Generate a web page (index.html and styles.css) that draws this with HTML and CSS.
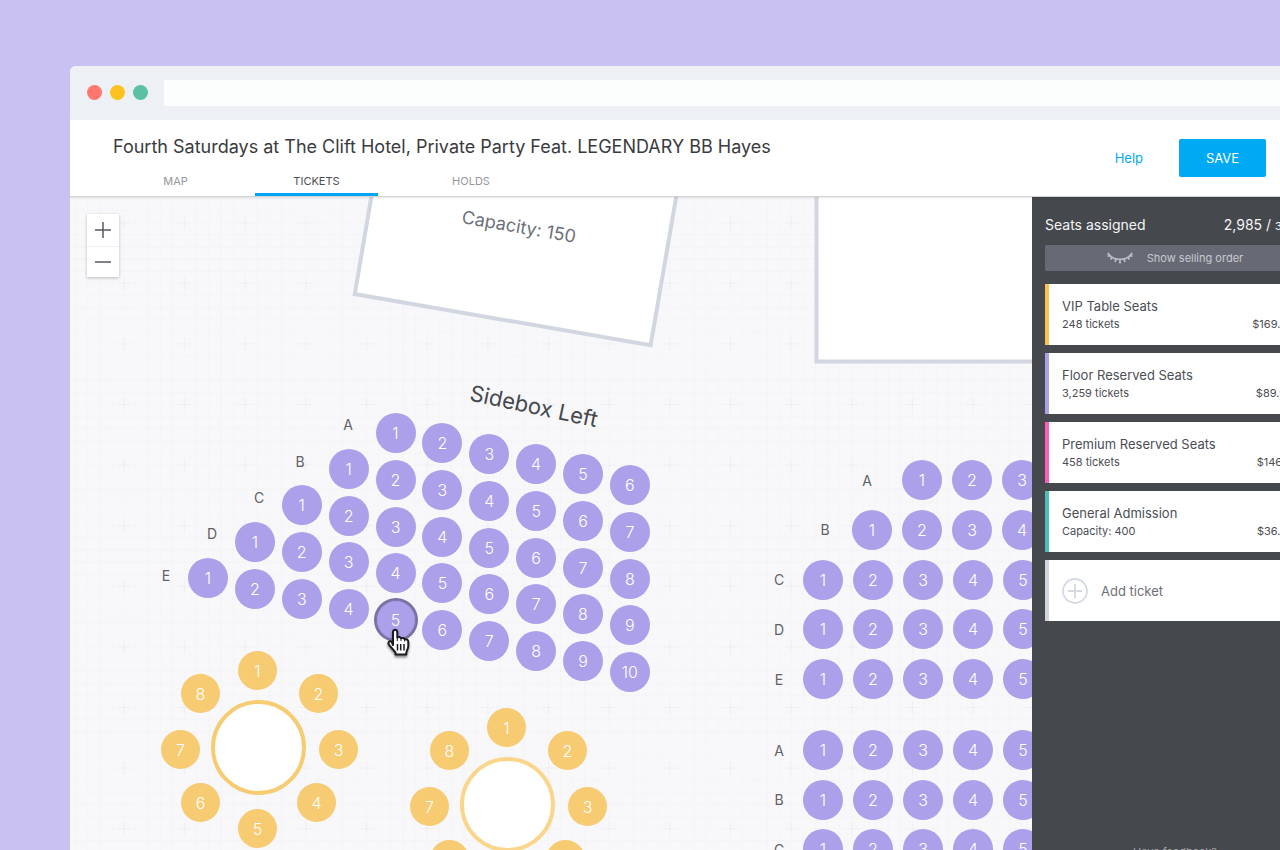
FILE: index.html
```html
<!DOCTYPE html>
<html lang="en">
<head>
<meta charset="utf-8">
<title>Seat map – Tickets</title>
<link rel="stylesheet" href="styles.css">
</head>
<body>
<div class="window">
  <div class="chrome">
    <span class="light light-red"></span>
    <span class="light light-yellow"></span>
    <span class="light light-green"></span>
    <input class="address" type="text" aria-label="Address">
  </div>

  <header class="header">
    <div class="header-main">
      <h1 class="title">Fourth Saturdays at The Clift Hotel, Private Party Feat. LEGENDARY BB Hayes</h1>
      <nav class="tabs">
        <a class="tab" href="#map">MAP</a>
        <a class="tab tab-active" href="#tickets" aria-current="page">TICKETS</a>
        <a class="tab tab-wide" href="#holds">HOLDS</a>
      </nav>
    </div>
    <div class="actions">
      <a class="help" href="#help">Help</a>
      <button class="save" type="button">SAVE</button>
    </div>
  </header>

  <div class="workspace">
    <main class="map">
      <svg class="backdrop" aria-hidden="true">
        <defs>
          <pattern id="grid" x="23.7" y="-4.6" width="60.65" height="60.6" patternUnits="userSpaceOnUse">
            <path d="M6.1 0V60.6M18.2 0V60.6M30.3 0V60.6M42.4 0V60.6M54.6 0V60.6M0 6.1H60.65M0 18.2H60.65M0 30.3H60.65M0 42.4H60.65M0 54.6H60.65" stroke="#f5f5f8" stroke-width="1.2"/>
            <path d="M24.3 30.3H36.3M30.3 24.3V36.3" stroke="#eeeff2" stroke-width="1.2"/>
          </pattern>
        </defs>
        <rect width="100%" height="100%" fill="url(#grid)"/>
        <path d="M311 -57L284.800 97L580.600 148.300L616 -57Z" fill="#fff" stroke="#d1d6e0" stroke-width="4"/>
        <path d="M746.5 -40V164.5H1100V-40Z" fill="#fff" stroke="#d1d6e0" stroke-width="4"/>
      </svg>

      <p class="area-label capacity">Capacity: 150</p>
      <p class="area-label sidebox">Sidebox Left</p>

      <span class="row-name name-a">A</span>
      <span class="row-name name-b">B</span>
      <span class="row-name name-c">C</span>
      <span class="row-name name-d">D</span>
      <span class="row-name name-e">E</span>

      <div class="side-block">
        <div class="column col-1"><button class="seat">1</button></div>
        <div class="column col-2"><button class="seat">1</button><button class="seat">2</button></div>
        <div class="column col-3"><button class="seat">1</button><button class="seat">2</button><button class="seat">3</button></div>
        <div class="column col-4"><button class="seat">1</button><button class="seat">2</button><button class="seat">3</button><button class="seat">4</button></div>
        <div class="column col-5"><button class="seat">1</button><button class="seat">2</button><button class="seat">3</button><button class="seat">4</button><button class="seat seat-hover">5</button></div>
        <div class="column col-6"><button class="seat">2</button><button class="seat">3</button><button class="seat">4</button><button class="seat">5</button><button class="seat">6</button></div>
        <div class="column col-7"><button class="seat">3</button><button class="seat">4</button><button class="seat">5</button><button class="seat">6</button><button class="seat">7</button></div>
        <div class="column col-8"><button class="seat">4</button><button class="seat">5</button><button class="seat">6</button><button class="seat">7</button><button class="seat">8</button></div>
        <div class="column col-9"><button class="seat">5</button><button class="seat">6</button><button class="seat">7</button><button class="seat">8</button><button class="seat">9</button></div>
        <div class="column col-10"><button class="seat">6</button><button class="seat">7</button><button class="seat">8</button><button class="seat">9</button><button class="seat">10</button></div>
      </div>

      <div class="table table-1">
        <div class="table-top"></div>
        <button class="chair n">1</button><button class="chair ne">2</button><button class="chair e">3</button><button class="chair se">4</button><button class="chair s">5</button><button class="chair sw">6</button><button class="chair w">7</button><button class="chair nw">8</button>
      </div>
      <div class="table table-2">
        <div class="table-top"></div>
        <button class="chair n">1</button><button class="chair ne">2</button><button class="chair e">3</button><button class="chair se">4</button><button class="chair s">5</button><button class="chair sw">6</button><button class="chair w">7</button><button class="chair nw">8</button>
      </div>

      <div class="floor">
        <div class="rows rows-upper">
          <div class="row row-far"><span>A</span><button class="seat">1</button><button class="seat">2</button><button class="seat">3</button></div>
          <div class="row row-near"><span>B</span><button class="seat">1</button><button class="seat">2</button><button class="seat">3</button><button class="seat">4</button></div>
          <div class="row"><span>C</span><button class="seat">1</button><button class="seat">2</button><button class="seat">3</button><button class="seat">4</button><button class="seat">5</button></div>
          <div class="row"><span>D</span><button class="seat">1</button><button class="seat">2</button><button class="seat">3</button><button class="seat">4</button><button class="seat">5</button></div>
          <div class="row"><span>E</span><button class="seat">1</button><button class="seat">2</button><button class="seat">3</button><button class="seat">4</button><button class="seat">5</button></div>
        </div>
        <div class="rows">
          <div class="row"><span>A</span><button class="seat">1</button><button class="seat">2</button><button class="seat">3</button><button class="seat">4</button><button class="seat">5</button></div>
          <div class="row"><span>B</span><button class="seat">1</button><button class="seat">2</button><button class="seat">3</button><button class="seat">4</button><button class="seat">5</button></div>
          <div class="row"><span>C</span><button class="seat">1</button><button class="seat">2</button><button class="seat">3</button><button class="seat">4</button><button class="seat">5</button></div>
        </div>
      </div>

      <div class="zoom">
        <button type="button" aria-label="Zoom in"><svg width="16" height="16" viewBox="0 0 16 16"><path d="M0 8H16M8 0V16" stroke="#55585e" stroke-width="1.5"/></svg></button>
        <button type="button" aria-label="Zoom out"><svg width="16" height="16" viewBox="0 0 16 16"><path d="M0 8H16" stroke="#55585e" stroke-width="1.5"/></svg></button>
      </div>

      <svg class="pointer" width="26" height="30" viewBox="0 0 26 30" aria-hidden="true">
        <path d="M8 17V4.200C8 .8 12.300 .8 12.300 4.200V9.500C13.500 8.500 15.600 8.900 16 10.300C17.300 9.500 19.300 10 19.700 11.500C21.500 10.800 23.300 11.800 23.300 13.800V18C23.300 21 21.300 22.500 21.300 25V26.500H10.500V24.500C8.500 22.300 6.500 19.500 4.500 17.300C2 14.500 4.500 12 6.800 14.200Z" fill="#fff" stroke="#1d1b22" stroke-width="2" stroke-linejoin="round"/>
        <path d="M12.300 9.500V13M16 10.500V13M19.700 11.500V13.500" stroke="#1d1b22" stroke-width="1" fill="none"/>
        <path d="M12.500 16V22.500M15.700 16V22.500M19 16V22.500" stroke="#1d1b22" stroke-width="1.500" fill="none"/>
      </svg>
    </main>

    <aside class="sidebar">
      <div class="summary"><span>Seats assigned</span><span>2,985 / <small>3,965</small></span></div>
      <button class="selling" type="button">
        <svg width="26" height="14" viewBox="0 0 26 14" aria-hidden="true"><path d="M1 2C6 10.500 20 10.500 25 2M1.500 2V6M5 6L3.500 8.500M9 8L8 11M13 8.500V12.500M17 8L18 11M21 6L22.500 8.500M24.500 2V6" fill="none" stroke="#b9bcc5" stroke-width="1.700"/></svg>
        <span>Show selling order</span>
      </button>
      <ul class="tickets">
        <li class="ticket vip"><div><h2>VIP Table Seats</h2><p>248 tickets</p></div><span class="price">$169.75</span></li>
        <li class="ticket reserved"><div><h2>Floor Reserved Seats</h2><p>3,259 tickets</p></div><span class="price">$89.99</span></li>
        <li class="ticket premium"><div><h2>Premium Reserved Seats</h2><p>458 tickets</p></div><span class="price">$146.11</span></li>
        <li class="ticket general"><div><h2>General Admission</h2><p>Capacity: 400</p></div><span class="price">$36.75</span></li>
        <li><button class="add" type="button"><svg width="26" height="26" viewBox="0 0 26 26" aria-hidden="true"><circle cx="13" cy="13" r="12" fill="none" stroke="#d5d9e4" stroke-width="1.800"/><path d="M6 13H20M13 6V20" stroke="#d5d9e4" stroke-width="1.800"/></svg>Add ticket</button></li>
      </ul>
      <a class="feedback" href="#feedback">Have feedback?</a>
    </aside>
  </div>
</div>
</body>
</html>
```
FILE: styles.css
```css
* { box-sizing: border-box; }

body {
  margin: 0;
  height: 100vh;
  overflow: hidden;
  padding: 66px 0 0 70px;
  background: #c9c1f1;
  color: #45484d;
  font-family: Inter, "Liberation Sans", sans-serif;
}

h1, h2, p, ul { margin: 0; padding: 0; font-weight: 400; list-style: none; }
a { text-decoration: none; }
button { font: inherit; border: 0; padding: 0; cursor: pointer; }

/* The window runs past the right and bottom edges of the page */
.window {
  display: flex;
  flex-direction: column;
  margin-right: -38px;
  height: calc(100vh - 36px);
  border-radius: 6px 0 0 0;
  overflow: hidden;
  background: #fff;
}

.chrome {
  display: flex;
  align-items: center;
  gap: 8px;
  height: 54px;
  padding: 0 0 1px 17px;
  background: #edf0f5;
  flex: none;
}
.light { width: 15px; height: 15px; border-radius: 50%; }
.light-red { background: #ff776e; }
.light-yellow { background: #fdc120; }
.light-green { background: #5ac1a3; }
.address {
  flex: 1;
  height: 26px;
  margin-left: 8px;
  border: 0;
  background: #fcfefe;
}

.header {
  display: flex;
  justify-content: space-between;
  height: 77px;
  padding: 0 52px 0 43px;
  background: #fff;
  border-bottom: 1px solid #d3d3d5;
  box-shadow: 0 1px 2px rgba(0, 0, 0, 0.1);
  position: relative;
  z-index: 2;
  flex: none;
}
.header-main { display: flex; flex-direction: column; justify-content: space-between; }
.title { padding-top: 15px; font-size: 18px; line-height: 24px; color: #3a3b3d; white-space: nowrap; }
.tabs { display: flex; gap: 18px; margin-left: 1px; }
.tab {
  width: 123px;
  height: 29px;
  border-bottom: 3px solid transparent;
  text-align: center;
  font-size: 11px;
  line-height: 28px;
  color: #94979b;
}
.tab-wide { width: 150px; }
.tab-active { border-color: #00a5f4; color: #4b4e53; }
.actions { display: flex; align-items: center; gap: 36px; }
.help { font-size: 13px; color: #00a9f4; }
.save {
  width: 87px;
  height: 38px;
  border-radius: 2px;
  background: #00a9f4;
  color: #fff;
  font-size: 13px;
}

.workspace { display: flex; flex: 1; min-height: 0; }

.map { position: relative; flex: 1; overflow: hidden; background: #f8f8fb; }
.backdrop { position: absolute; inset: 0; width: 100%; height: 100%; }

.zoom {
  position: absolute;
  left: 17px;
  top: 17px;
  width: 32px;
  background: #fff;
  box-shadow: 0 1px 3px rgba(0, 0, 0, 0.25);
}
.zoom button { display: grid; place-items: center; width: 32px; height: 32px; background: none; }
.zoom button + button { height: 31px; border-top: 1px solid #f0f0f2; }

.area-label { position: absolute; white-space: nowrap; text-align: center; }
.capacity { left: 379px; top: 18px; width: 140px; font-size: 18px; line-height: 24px; color: #6d7079; transform: rotate(10deg); }
.sidebox { left: 384px; top: 194px; width: 160px; font-size: 22px; line-height: 30px; transform: rotate(12deg); }

.row-name { position: absolute; width: 20px; text-align: center; font-size: 14px; line-height: 20px; color: #606266; }
.name-a { left: 268px; top: 218px; }
.name-b { left: 220px; top: 255px; }
.name-c { left: 179px; top: 291px; }
.name-d { left: 132px; top: 327px; }
.name-e { left: 86px; top: 369px; }

.seat, .chair {
  flex: none;
  width: 40px;
  height: 40px;
  border-radius: 50%;
  background: #ada0ea;
  color: #fff;
  font-size: 16px;
  font-weight: 300;
  text-align: center;
}
.seat-hover { box-shadow: inset 0 0 0 1px #786fa2, 0 0 0 2px #786fa2; }

.side-block {
  position: absolute;
  left: 118px;
  top: 216px;
  width: 462px;
  display: flex;
  align-items: flex-start;
  justify-content: space-between;
}
.column { display: flex; flex-direction: column; justify-content: space-between; height: 227px; }
.col-1 { margin-top: 145px; height: 40px; }
.col-2 { margin-top: 109px; height: 87px; }
.col-3 { margin-top: 72px; height: 134px; }
.col-4 { margin-top: 36px; height: 180px; }
.col-6 { margin-top: 10px; }
.col-7 { margin-top: 21px; }
.col-8 { margin-top: 31px; }
.col-9 { margin-top: 41px; }
.col-10 { margin-top: 52px; }

.table { position: absolute; width: 196px; height: 198px; }
.table-1 { left: 91px; top: 454px; }
.table-2 { left: 340px; top: 511px; }
.table-top {
  position: absolute;
  left: 50px;
  top: 49px;
  width: 95px;
  height: 95px;
  border: 4px solid #f7cb72;
  border-radius: 50%;
  background: #fff;
}
.table-2 .table-top { border-color: #fad68c; }
.chair { position: absolute; width: 39px; height: 39px; background: #f7cb72; }
.n { left: 77px; top: 0; }
.ne { left: 138px; top: 23px; }
.e { left: 158px; top: 79px; }
.se { left: 136px; top: 132px; }
.s { left: 77px; top: 158px; }
.sw { left: 20px; top: 132px; }
.w { left: 0; top: 79px; }
.nw { left: 20px; top: 23px; }

.floor { position: absolute; left: 703px; top: 263px; display: flex; flex-direction: column; gap: 31px; }
.rows { display: flex; flex-direction: column; justify-content: space-between; height: 139px; }
.rows-upper { height: 239px; }
.row { display: flex; align-items: center; gap: 10px; font-size: 14px; color: #606266; }
.row span { width: 12px; margin-right: 8px; text-align: center; }
.row-near { padding-left: 46px; }
.row-near span { margin-right: 11px; }
.row-far { padding-left: 88px; }
.row-far span { margin-right: 19px; }

.pointer { position: absolute; left: 315px; top: 431px; filter: drop-shadow(0 2px 1px rgba(0, 0, 0, 0.45)); }

.sidebar {
  display: flex;
  flex-direction: column;
  flex: none;
  width: 286px;
  padding: 18px 13px 20px;
  background: #45484c;
  color: #f4f4f6;
}
.summary { display: flex; justify-content: space-between; font-size: 14px; line-height: 20px; }
.summary small { font-size: 11px; }
.selling {
  display: flex;
  align-items: center;
  justify-content: center;
  gap: 14px;
  flex: none;
  height: 26px;
  margin: 9px 0 13px;
  border-radius: 2px;
  background: #676a74;
  color: #c6c9d2;
  font-size: 11px;
}
.tickets { display: flex; flex-direction: column; gap: 8px; }
.ticket {
  display: flex;
  justify-content: space-between;
  align-items: flex-end;
  height: 61px;
  padding: 0 12px 13px 13px;
  border-left: 4px solid;
  background: #fff;
}
.ticket h2 { font-size: 13px; line-height: 20px; color: #4b4e54; }
.ticket p, .price { font-size: 11px; line-height: 16px; color: #4b4e54; }
.vip { border-color: #fcc14e; }
.reserved { border-color: #ada0ea; }
.premium { border-color: #fc5fb4; }
.general { border-color: #4dbdb6; }
.add {
  display: flex;
  align-items: center;
  gap: 13px;
  width: 100%;
  height: 61px;
  padding-left: 13px;
  border-left: 4px solid #d1d3e0;
  background: #fff;
  color: #6d7078;
  font-size: 13px;
}
.feedback { margin-top: auto; text-align: center; font-size: 11px; line-height: 16px; color: #a2a4a8; }
```
